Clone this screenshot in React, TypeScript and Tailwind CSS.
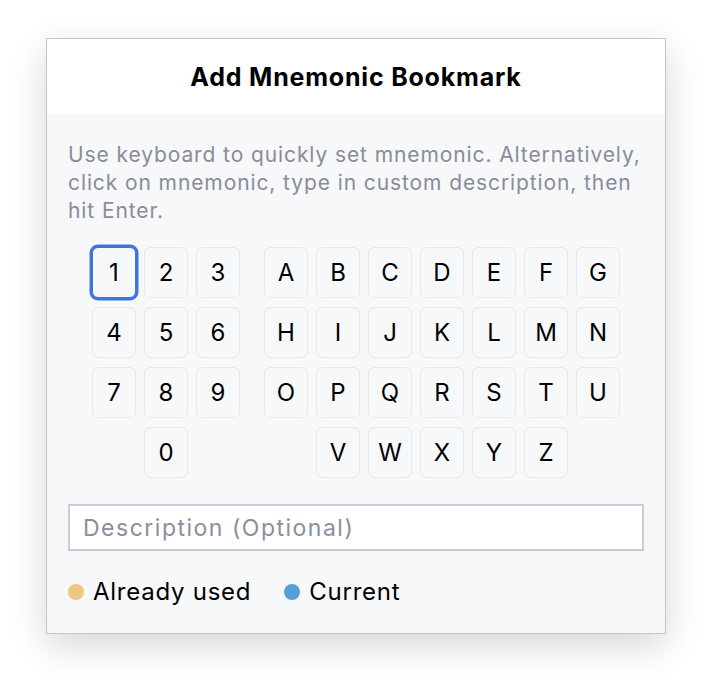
import React from "react";

const numberRows: string[][] = [
  ["1", "2", "3"],
  ["4", "5", "6"],
  ["7", "8", "9"],
  ["", "0", ""],
];

const letterRows: string[][] = [
  ["A", "B", "C", "D", "E", "F", "G"],
  ["H", "I", "J", "K", "L", "M", "N"],
  ["O", "P", "Q", "R", "S", "T", "U"],
  ["", "V", "W", "X", "Y", "Z", ""],
];

function Key({ label, current }: { label: string; current?: boolean }) {
  if (!label) return <div className="w-[44px] h-[51px]" />;
  return (
    <div
      className={
        current
          ? "w-[44px] h-[51px] flex items-center justify-center rounded-[6px] border-[1.5px] border-[#3d74e0] ring-[2.5px] ring-[#3d74e0] bg-[#f7f8fa] text-[24px] text-black"
          : "w-[44px] h-[51px] flex items-center justify-center rounded-[6px] border-[1.5px] border-[#e7e8eb] bg-[#f7f8fa] text-[24px] text-black"
      }
    >
      {label}
    </div>
  );
}

export default function App() {
  return (
    <div
      className="w-full h-[688px] bg-white flex justify-center pt-[38px]"
      style={{ fontFamily: "Inter, 'Noto Sans', sans-serif" }}
    >
      <div className="w-[620px] h-[596px] flex flex-col border border-[#c4c4c4] bg-[#f7f8fa] shadow-[0_12px_34px_rgba(0,0,0,0.16)]">
        {/* Header */}
        <div className="h-[75px] bg-white flex items-center justify-center pt-[3px]">
          <h1 className="text-[25px] font-bold text-black tracking-[0.8px]">
            Add Mnemonic Bookmark
          </h1>
        </div>

        {/* Body */}
        <div className="flex flex-col px-[21px] pt-[27px]">
          <p className="text-[21px] leading-[28px] tracking-[0.9px] text-[#898c9b] whitespace-nowrap">
            Use keyboard to quickly set mnemonic. Alternatively,
            <br />
            click on mnemonic, type in custom description, then
            <br />
            hit Enter.
          </p>

          <div className="flex justify-center gap-[24px] mt-[22px]">
            <div className="grid grid-cols-3 gap-x-[8px] gap-y-[9px]">
              {numberRows.flat().map((k, i) => (
                <Key key={"n" + i} label={k} current={k === "1"} />
              ))}
            </div>
            <div className="grid grid-cols-7 gap-x-[8px] gap-y-[9px]">
              {letterRows.flat().map((k, i) => (
                <Key key={"l" + i} label={k} />
              ))}
            </div>
          </div>

          <input
            type="text"
            placeholder="Description (Optional)"
            className="mt-[26px] h-[47px] w-full border-2 border-[#c9cbd5] bg-white px-[13px] text-[23px] tracking-[1.5px] text-black placeholder:text-[#8b8e9c] outline-none"
          />

          <div className="flex items-center mt-[26px] h-[30px] text-[24px] tracking-[0.75px] text-black">
            <span className="w-[16px] h-[16px] rounded-full bg-[#f0c77f]" />
            <span className="ml-[9px]">Already used</span>
            <span className="ml-[33px] w-[16px] h-[16px] rounded-full bg-[#539fd6]" />
            <span className="ml-[9px]">Current</span>
          </div>
        </div>
      </div>
    </div>
  );
}
